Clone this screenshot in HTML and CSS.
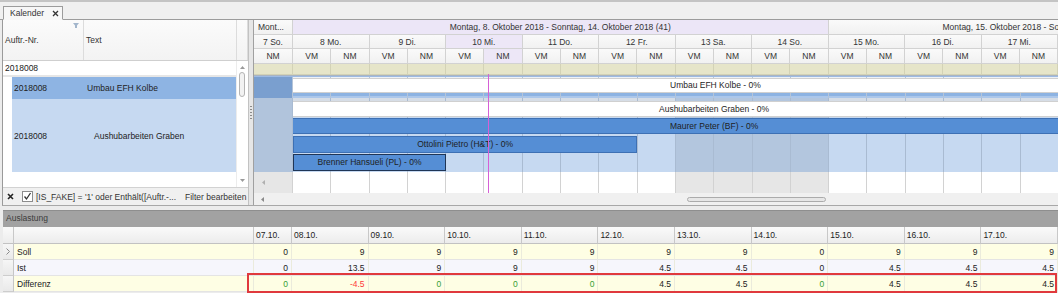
FILE: index.html
```html
<!DOCTYPE html>
<html>

<head>
	<meta charset="utf-8">
	<title>Kalender</title>
	<link rel="stylesheet" href="styles.css">
</head>

<body>
	<div class="tabstrip">
		<div class="tab">
			Kalender
			<svg class="tab-close" width="7" height="7" viewBox="0 0 7 7"><path d="M1 1L6 6M6 1L1 6" stroke="#333" stroke-width="1.3"/></svg>
		</div>
	</div>

	<div class="workspace">
		<div class="order-panel">
			<div class="order-head">
				<div class="head-cell">
					Auftr.-Nr.
					<svg class="filter-icon" width="6" height="5" viewBox="0 0 6 5"><path d="M0 0H6L4 2.5V5H2V2.5Z" fill="#a3b6cc"/></svg>
				</div>
				<div class="head-cell">Text</div>
				<div class="head-cell"></div>
			</div>
			<div class="order-body">
				<div class="order-rows">
					<div class="filter-row">2018008</div>
					<div class="order-row selected">
						<span class="col-nr">2018008</span>
						<span class="col-text">Umbau EFH Kolbe</span>
					</div>
					<div class="order-row tall">
						<span class="col-nr">2018008</span>
						<span class="col-text child">Aushubarbeiten Graben</span>
					</div>
				</div>
				<div class="vscroll">
					<svg width="5" height="3" viewBox="0 0 5 3"><path d="M0 3L2.5 0L5 3Z" fill="#9a9a9a"/></svg>
					<div class="vscroll-track"><div class="vscroll-thumb"></div></div>
					<svg width="5" height="3" viewBox="0 0 5 3"><path d="M0 0L2.5 3L5 0Z" fill="#9a9a9a"/></svg>
				</div>
			</div>
			<div class="filter-bar">
				<svg class="filter-clear" width="7" height="7" viewBox="0 0 7 7"><path d="M1 1L6 6M6 1L1 6" stroke="#222" stroke-width="1.6"/></svg>
				<span class="filter-check">
					<svg width="11" height="11" viewBox="0 0 11 11"><rect x="0.5" y="0.5" width="10" height="10" fill="#fff" stroke="#8c8c8c"/><path d="M2.5 5.5L4.5 8L8.5 2" fill="none" stroke="#333" stroke-width="1.3"/></svg>
				</span>
				<span class="filter-text">[IS_FAKE] = '1' oder Enthält([Auftr.-...</span>
				<span class="filter-edit">Filter bearbeiten</span>
			</div>
		</div>

		<div class="splitter"><span class="grip"></span></div>

		<div class="gantt">
			<div class="gantt-head">
				<div class="gh week lead">Mont...</div>
				<div class="gh week current">Montag, 8. Oktober 2018 - Sonntag, 14. Oktober 2018 (41)</div>
				<div class="gh week next">Montag, 15. Oktober 2018 - Sonntag, 21. Oktober 2018 (42)</div>

				<div class="gh">7 So.</div>
				<div class="gh day">8 Mo.</div>
				<div class="gh day">9 Di.</div>
				<div class="gh day today">10 Mi.</div>
				<div class="gh day">11 Do.</div>
				<div class="gh day">12 Fr.</div>
				<div class="gh day">13 Sa.</div>
				<div class="gh day">14 So.</div>
				<div class="gh day">15 Mo.</div>
				<div class="gh day">16 Di.</div>
				<div class="gh day">17 Mi.</div>

				<div class="gh">NM</div>
				<div class="gh">VM</div><div class="gh">NM</div>
				<div class="gh">VM</div><div class="gh">NM</div>
				<div class="gh">VM</div><div class="gh today">NM</div>
				<div class="gh">VM</div><div class="gh">NM</div>
				<div class="gh">VM</div><div class="gh">NM</div>
				<div class="gh">VM</div><div class="gh">NM</div>
				<div class="gh">VM</div><div class="gh">NM</div>
				<div class="gh">VM</div><div class="gh">NM</div>
				<div class="gh">VM</div><div class="gh">NM</div>
				<div class="gh">VM</div><div class="gh">NM</div>

				<div class="gh mark"></div>
				<div class="gh mark"></div><div class="gh mark"></div>
				<div class="gh mark"></div><div class="gh mark"></div>
				<div class="gh mark"></div><div class="gh mark"></div>
				<div class="gh mark"></div><div class="gh mark"></div>
				<div class="gh mark"></div><div class="gh mark"></div>
				<div class="gh mark"></div><div class="gh mark"></div>
				<div class="gh mark"></div><div class="gh mark"></div>
				<div class="gh mark"></div><div class="gh mark"></div>
				<div class="gh mark"></div><div class="gh mark"></div>
				<div class="gh mark"></div><div class="gh mark"></div>
			</div>
			<div class="gantt-band"></div>

			<div class="gantt-row row-order">
				<div class="bar plain bar-full bar-r2">Umbau EFH Kolbe - 0%</div>
			</div>

			<div class="gantt-row row-child">
				<div class="bar plain bar-full bar-r2 shifted">Aushubarbeiten Graben - 0%</div>
				<div class="bar resource bar-full bar-r4">Maurer Peter (BF) - 0%</div>
				<div class="bar resource bar-ottolini">Ottolini Pietro (H&amp;T) - 0%</div>
				<div class="bar resource focused bar-brenner">Brenner Hansueli (PL) - 0%</div>
			</div>

			<div class="gantt-row row-empty">
				<svg class="lead-arrow" width="3" height="5" viewBox="0 0 3 5"><path d="M3 0L0 2.5L3 5Z" fill="#b0b0b0"/></svg>
			</div>

			<div class="hscroll">
				<svg width="3" height="5" viewBox="0 0 3 5"><path d="M3 0L0 2.5L3 5Z" fill="#8a8a8a"/></svg>
				<div class="hscroll-thumb"></div>
			</div>

			<div class="today-line"></div>
		</div>
	</div>

	<div class="load-panel">
		<div class="load-title">Auslastung</div>
		<div class="load-grid">
			<div class="load-row head">
				<div class="ind"></div><div class="name"></div>
				<div>07.10.</div><div>08.10.</div><div>09.10.</div><div>10.10.</div><div>11.10.</div>
				<div>12.10.</div><div>13.10.</div><div>14.10.</div><div>15.10.</div><div>16.10.</div><div>17.10.</div>
			</div>
			<div class="load-row soll">
				<div class="ind">
					<svg width="4" height="7" viewBox="0 0 4 7"><path d="M0.5 0.5L3.5 3.5L0.5 6.5" fill="none" stroke="#8a8a8a"/></svg>
				</div>
				<div class="name">Soll</div>
				<div>0</div><div>9</div><div>9</div><div>9</div><div>9</div><div>9</div>
				<div>9</div><div>0</div><div>9</div><div>9</div><div>9</div>
			</div>
			<div class="load-row ist">
				<div class="ind"></div>
				<div class="name">Ist</div>
				<div>0</div><div>13.5</div><div>9</div><div>9</div><div>9</div><div>4.5</div>
				<div>4.5</div><div>0</div><div>4.5</div><div>4.5</div><div>4.5</div>
			</div>
			<div class="load-row diff">
				<div class="ind"></div>
				<div class="name">Differenz</div>
				<div class="ok">0</div><div class="over">-4.5</div><div class="ok">0</div><div class="ok">0</div><div class="ok">0</div><div>4.5</div>
				<div>4.5</div><div class="ok">0</div><div>4.5</div><div>4.5</div><div>4.5</div>
			</div>
		</div>
		<div class="diff-mark"></div>
	</div>
</body>

</html>
```

FILE: styles.css
```css
* {
  box-sizing: border-box;
}

html,
body {
  margin: 0;
}

body {
  width: 1058px;
  height: 293px;
  overflow: hidden;
  background-color: #ececec;
  font-family: "Liberation Sans", Arial, sans-serif;
  font-size: 8.5px;
  color: #222;
}

/* tab strip */
.tabstrip {
  height: 20px;
  border-top: 2px solid #c4c4c4;
  border-bottom: 1px solid #9c9c9c;
  background-color: #f0f0f0;
  padding-left: 3px;
  display: flex;
  align-items: flex-end;
}

.tab {
  width: 60px;
  height: 14px;
  margin-bottom: -1px;
  padding-left: 6px;
  display: flex;
  align-items: center;
  gap: 8px;
  background-color: #f7f7f7;
  border: 1px solid #9c9c9c;
  border-bottom-color: #f7f7f7;
  color: #333;
}

/* main area */
.workspace {
  height: 186px;
  margin-left: 2px;
  display: flex;
  border-left: 1px solid #9a9a9a;
  border-bottom: 1px solid #a8a8a8;
}

.order-panel {
  width: 246px;
  display: flex;
  flex-direction: column;
  background-color: #fff;
  border-right: 1px solid #c2c2c2;
}

.order-head {
  height: 41px;
  display: grid;
  grid-template-columns: 81px 153px 1fr;
  background: linear-gradient(#fbfbfb, #f3f3f3);
  border-bottom: 1px solid #cfcfcf;
}

.head-cell {
  position: relative;
  display: flex;
  align-items: center;
  padding-left: 2px;
  border-right: 1px solid #dcdcdc;
  color: #333;
}

.filter-icon {
  position: absolute;
  top: 3px;
  right: 4px;
}

.order-body {
  height: 126px;
  display: flex;
}

.order-rows {
  flex: 1;
}

.filter-row {
  height: 16px;
  padding-left: 2px;
  line-height: 14px;
  border-bottom: 2px solid #e6e6e6;
}

.order-row {
  margin-left: 9px;
  display: flex;
  align-items: center;
}

.order-row.selected {
  height: 22px;
  background-color: #8eb4e3;
}

.order-row.tall {
  height: 73px;
  background-color: #c6d9f1;
}

.col-nr {
  width: 75px;
  padding-left: 2px;
}

.col-text.child {
  padding-left: 7px;
}

.vscroll {
  width: 12px;
  display: flex;
  flex-direction: column;
  align-items: center;
  padding-block: 5px;
  gap: 3px;
  border-left: 1px solid #ececec;
}

.vscroll-track {
  flex: 1;
  width: 100%;
  padding-left: 2px;
}

.vscroll-thumb {
  width: 6px;
  height: 25px;
  background-color: #f2f2f2;
  border: 1px solid #b4b4b4;
  border-radius: 3px;
}

.filter-bar {
  height: 18px;
  display: flex;
  align-items: center;
  padding-left: 3px;
  background-color: #f0f0f0;
  border-top: 1px solid #d2d2d2;
  color: #333;
  white-space: nowrap;
}

.filter-clear {
  margin-left: 1px;
  margin-right: 8px;
}

.filter-check {
  display: flex;
  margin-right: 3px;
}

.filter-text {
  width: 149px;
  overflow: hidden;
}

.splitter {
  width: 4px;
  position: relative;
  background-color: #e6e6e6;
}

.grip {
  position: absolute;
  left: 1px;
  top: 86px;
  width: 2px;
  height: 15px;
  background: repeating-linear-gradient(#8c8c8c 0 1px, transparent 1px 3px);
}

/* gantt */
.gantt {
  flex: 1;
  position: relative;
  overflow: hidden;
  display: flex;
  flex-direction: column;
  border-left: 1px solid #a0a0a0;
  background-color: #fff;
}

.gantt-head {
  display: grid;
  grid-template-columns: 39px repeat(20, 1fr);
  grid-template-rows: 15px 14px 15px 11px;
  color: #333;
}

.gh {
  display: flex;
  align-items: center;
  justify-content: center;
  white-space: nowrap;
  overflow: hidden;
  background: linear-gradient(#fafafa, #f1f1f1);
  border-right: 1px solid #d2d2d2;
  border-bottom: 1px solid #d2d2d2;
}

.gh.week.lead {
  justify-content: flex-start;
  padding-left: 4px;
}

.gh.week.current {
  grid-column: span 14;
  background: #ece6f7;
}

.gh.week.next {
  grid-column: span 6;
  justify-content: flex-start;
  padding-left: 114px;
  border-right: none;
}

.gh.day {
  grid-column: span 2;
}

.gh.today {
  background: #ede7f7;
}

.gh.mark {
  background: #e6e5c9;
  border-color: #d3d2b6;
}

.gantt-band {
  height: 2px;
  background: linear-gradient(#a9b4c2 0 1px, #9dbbe4 1px);
}

.gantt-row {
  display: grid;
  grid-template-columns: 39px repeat(20, 1fr);
  background-image:
    linear-gradient(to right, var(--lead-bg) 0 38px, var(--line) 38px 39px, transparent 39px),
    repeating-linear-gradient(to right, transparent 0 37.3px, var(--line) 37.3px 38.3px),
    linear-gradient(to right, transparent 422px, var(--weekend-bg) 422px 575px, transparent 575px),
    var(--cell-bg);
  background-position: 0 0, 39px 0, 0 0, 0 0;
}

.row-order {
  height: 21px;
  grid-template-rows: 1px 15px 5px;
  --lead-bg: #7a9fcf;
  --line: #b4c4d8;
  --weekend-bg: transparent;
  --cell-bg: linear-gradient(#eef1f5 0 1px, #fff 1px 16px, #8db3e2 16px 19px, #acc7ea 19px);
}

.row-child {
  height: 74px;
  grid-template-rows: 3px 16px 1px 16px 2px 17px 1px 17px 1px;
  --lead-bg: #b1c4dc;
  --line: #a9bbd2;
  --weekend-bg: #b3c6de;
  --cell-bg: linear-gradient(#d6dde6 0 3px, #c6d9f1 3px);
}

.row-empty {
  height: 21px;
  align-items: center;
  --lead-bg: #e6e6e6;
  --line: #d2d2d2;
  --weekend-bg: #e6e6e6;
  --cell-bg: linear-gradient(#fff, #fff);
}

.lead-arrow {
  margin-left: 8px;
}

.bar {
  white-space: nowrap;
  overflow: hidden;
  color: #1e1e1e;
}

.bar-full {
  grid-column: 2 / -1;
}

.bar-r2 {
  grid-row: 2;
}

.bar-r4 {
  grid-row: 4;
}

.bar.plain {
  padding-left: 377px;
  line-height: 13px;
  background-color: #fff;
  border-top: 1px solid #d0d0d0;
  border-bottom: 1px solid #d0d0d0;
}

.bar.plain.shifted {
  padding-left: 366px;
  line-height: 14px;
}

.bar.resource {
  background-color: #558ed5;
  border: 1px solid #3d70b4;
  line-height: 14px;
}

.bar.bar-r4 {
  border-right: none;
  border-left: none;
  padding-left: 377px;
}

.bar-ottolini {
  grid-row: 6;
  grid-column: 2 / 11;
  text-align: center;
}

.bar-brenner {
  grid-row: 8;
  grid-column: 2 / 6;
  text-align: center;
}

.bar.focused {
  border-color: #1f3556;
}

.hscroll {
  height: 12px;
  display: flex;
  align-items: center;
  padding-left: 7px;
  background-color: #f0f0f0;
}

.hscroll-thumb {
  width: 139px;
  height: 5px;
  margin-left: 423px;
  background-color: #e6e6e6;
  border: 1px solid #ababab;
  border-radius: 3px;
}

.today-line {
  position: absolute;
  left: 234px;
  top: 54px;
  width: 1px;
  height: 119px;
  background-color: #d660d6;
}

/* load table */
.load-panel {
  position: relative;
  padding: 4px 0 0 3px;
}

.load-title {
  height: 17px;
  padding-left: 3px;
  line-height: 15px;
  background-color: #a2a2a2;
  border-top: 1px solid #8e8e8e;
  color: #3c3c3c;
}

.load-grid {
  display: grid;
  grid-template-columns: 11px 240px 38px repeat(10, 1fr);
  grid-template-rows: 17px 16px 16px 16px;
}

.load-row {
  display: contents;
}

.load-row > div {
  padding-right: 3px;
  display: flex;
  align-items: center;
  justify-content: flex-end;
  border-right: 1px solid #ebebdc;
  border-bottom: 1px solid #e4e4e4;
}

.load-row > .name {
  justify-content: flex-start;
  padding-left: 3px;
}

.load-row > .ind {
  padding: 0;
  justify-content: center;
  background: linear-gradient(#f6f6f6, #e9e9e9);
  border-right: 1px solid #c6c6c6;
  border-bottom: 1px solid #cdcdcd;
}

.load-row.head > div {
  justify-content: flex-start;
  padding-left: 2px;
  background: linear-gradient(#fafafa, #ececec);
  border-right: 1px solid #c8c8c8;
  border-bottom: 1px solid #c2c2c2;
}

.soll > div,
.diff > div {
  background-color: #fefee4;
}

.ist > div {
  background-color: #f6f6fc;
}

.load-row > .ok {
  color: #35a035;
}

.load-row > .over {
  color: #ff3a3a;
}

.diff-mark {
  position: absolute;
  left: 247px;
  top: 67px;
  width: 810px;
  height: 20px;
  border: 2px solid #e0393d;
}
```
